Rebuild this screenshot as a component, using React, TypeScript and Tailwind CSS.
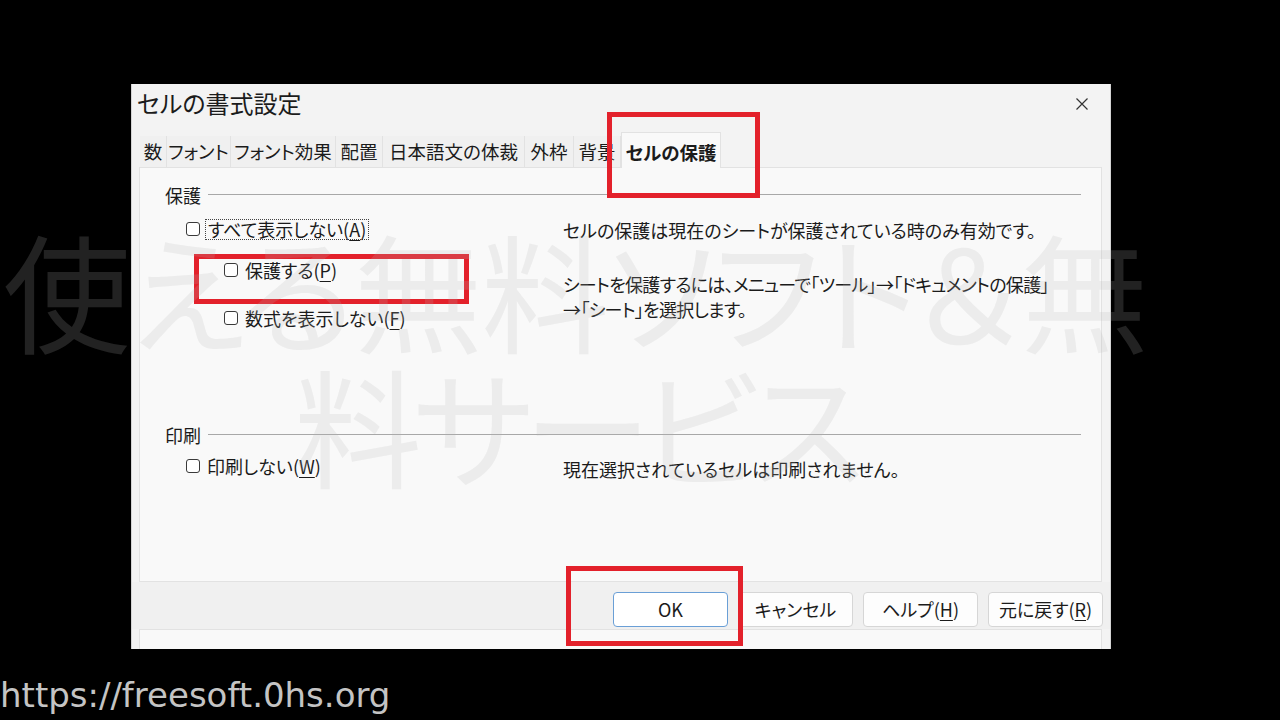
import React from "react";

const JP = "font-['Noto_Sans_CJK_JP',sans-serif] [font-feature-settings:'palt']";

function Box() {
  return <span className="inline-block w-[14px] h-[14px] shrink-0 border border-[#3a3a3a] rounded-[3px] bg-white" />;
}

function U({ c }: { c: string }) {
  return <span className="underline underline-offset-[3px] decoration-1">{c}</span>;
}

function Check({ label, m, focus }: { label: string; m: string; focus?: boolean }) {
  return (
    <div className="flex items-center h-[26px]">
      <Box />
      <span
        className={
          focus
            ? "ml-[5px] px-[2px] leading-[19px] border border-dotted border-[#444]"
            : "ml-[7px] leading-[26px]"
        }
      >
        {label}(<U c={m} />)
      </span>
    </div>
  );
}

function Header({ label }: { label: string }) {
  return (
    <div className="flex items-center h-[24px]">
      <span className="leading-[24px]">{label}</span>
      <span className="ml-[7px] flex-1 h-px bg-[#a8a8a8] -translate-y-[1px]" />
    </div>
  );
}

const tabs: { t: string; w: string }[] = [
  { t: "数", w: "w-[27px]" },
  { t: "フォント", w: "w-[64px]" },
  { t: "フォント効果", w: "w-[105px]" },
  { t: "配置", w: "w-[47px]" },
  { t: "日本語文の体裁", w: "w-[142px]" },
  { t: "外枠", w: "w-[49px]" },
  { t: "背景", w: "w-[47px]" },
];

function Btn({ children, primary }: { children: React.ReactNode; primary?: boolean }) {
  return (
    <div
      className={
        "w-[115px] h-[35px] flex items-center justify-center rounded-[4px] border text-[18px] " +
        (primary ? "border-[#6a9fd6] bg-white" : "border-[#d6d6d6] bg-[#fdfdfd]")
      }
    >
      {children}
    </div>
  );
}

export default function App() {
  return (
    <div className="relative w-[1280px] h-[720px] bg-black overflow-hidden">
      <div className="pt-[84px] pl-[131px]">
        <div className={"w-[980px] h-[565px] bg-[#f3f3f3] border-l border-r border-[#d4d4d4] flex flex-col text-[#1b1b1b] " + JP}>
          {/* title */}
          <div className="h-[48px] flex items-start justify-between pt-[4px] pl-[5px] pr-[22px]">
            <span className="text-[24px] leading-[30px]">セルの書式設定</span>
            <svg width="12" height="12" viewBox="0 0 12 12" className="mt-[10px]">
              <path d="M0.5 0.5 L11.5 11.5 M11.5 0.5 L0.5 11.5" stroke="#333" strokeWidth="1.2" />
            </svg>
          </div>
          {/* tabs */}
          <div className="h-[35px] flex items-end pl-[8px] text-[18.5px]">
            {tabs.map((tb) => (
              <div
                key={tb.t}
                className={tb.w + " h-[31px] leading-[31px] text-center bg-[#f0f0f0] border-r border-[#e2e2e2] whitespace-nowrap"}
              >
                {tb.t}
              </div>
            ))}
            <div className="relative z-10 w-[100px] h-[36px] -mb-px pt-[4px] leading-[31px] text-center font-bold bg-[#f9f9f9] border-x border-t border-[#e2e2e2] whitespace-nowrap">
              セルの保護
            </div>
          </div>
          {/* panel */}
          <div className="ml-[7px] mr-[8px] h-[415px] bg-[#f9f9f9] border border-[#e2e2e2] pt-[15px] pl-[25px] pr-[20px] text-[18px]">
            <Header label="保護" />
            <div className="flex">
              <div className="w-[398px] shrink-0">
                <div className="mt-[9px] ml-[21px]">
                  <Check label="すべて表示しない" m="A" focus />
                </div>
                <div className="mt-[15px] ml-[59px]">
                  <Check label="保護する" m="P" />
                </div>
                <div className="mt-[22px] ml-[59px]">
                  <Check label="数式を表示しない" m="F" />
                </div>
              </div>
              <div className="flex-1 leading-[25px] whitespace-nowrap">
                <div className="mt-[11px]">セルの保護は現在のシートが保護されている時のみ有効です。</div>
                <div className="mt-[29px] tracking-[-0.7px]">シートを保護するには、メニューで「ツール」→「ドキュメントの保護」</div>
                <div className="tracking-[-0.7px]">→「シート」を選択します。</div>
              </div>
            </div>
            <div className="mt-[92px]">
              <Header label="印刷" />
            </div>
            <div className="flex">
              <div className="w-[398px] shrink-0">
                <div className="mt-[6px] ml-[21px]">
                  <Check label="印刷しない" m="W" />
                </div>
              </div>
              <div className="flex-1 leading-[25px]">
                <div className="mt-[10px]">現在選択されているセルは印刷されません。</div>
              </div>
            </div>
          </div>
          {/* button bar */}
          <div className="h-[47px] bg-[#f0f0f0] flex justify-end items-start pt-[10px] pr-[7px] gap-[10px]">
            <Btn primary>OK</Btn>
            <Btn>キャンセル</Btn>
            <Btn>
              ヘルプ(<U c="H" />)
            </Btn>
            <Btn>
              元に戻す(<U c="R" />)
            </Btn>
          </div>
          {/* lower strip */}
          <div className="flex-1 flex">
            <div className="ml-[7px] mr-[8px] flex-1 bg-[#f9f9f9] border-l border-t border-r border-[#e2e2e2]" />
          </div>
        </div>
      </div>

      <div className="mt-[26px] h-[40px] leading-[40px] text-[34px] text-[#c4c4c4] font-['DejaVu_Sans',sans-serif] whitespace-nowrap">
        https://freesoft.0hs.org
      </div>

      {/* red highlight boxes */}
      <div className="absolute left-[607px] top-[112px] w-[153px] h-[86px] border-[5px] border-[#e3212b] z-20" />
      <div className="absolute left-[194px] top-[254px] w-[275px] h-[50px] border-[5px] border-[#e3212b] z-20" />
      <div className="absolute left-[566px] top-[566px] w-[177px] h-[80px] border-[5px] border-[#e3212b] z-20" />

      {/* watermark */}
      <div className="absolute left-0 top-[221px] w-[1150px] text-center text-[128px] leading-[135px] font-['Noto_Sans_CJK_JP',sans-serif] [font-feature-settings:'palt'] text-[rgba(180,180,180,0.19)] pointer-events-none z-30 whitespace-nowrap">
        <span className="tracking-[-1px]">使える無料ソフト＆無</span>
        <br />
        <span className="tracking-[-9px]">料サービス</span>
      </div>
    </div>
  );
}
